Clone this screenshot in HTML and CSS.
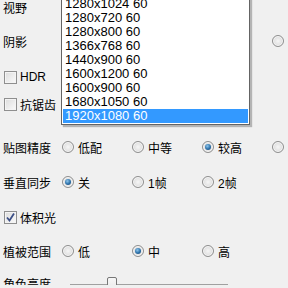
FILE: index.html
```html
<!DOCTYPE html>
<html lang="zh-CN">
<head>
    <meta charset="UTF-8">
    <title>画面设置</title>
    <link rel="stylesheet" href="styles.css">
</head>
<body>
    <div class="panel">
        <div class="row r-view">
            <span class="label">视野</span>
        </div>

        <div class="row r-shadow">
            <span class="label">阴影</span>
            <label class="opt"><span class="radio"></span></label>
            <label class="opt"><span class="radio"></span></label>
            <label class="opt"><span class="radio checked"></span></label>
            <label class="opt"><span class="radio"></span></label>
        </div>

        <div class="row r-hdr">
            <label class="check"><span class="box"></span>HDR</label>
        </div>

        <div class="row r-aa">
            <label class="check"><span class="box"></span>抗锯齿</label>
        </div>

        <div class="row r-tex">
            <span class="label">贴图精度</span>
            <label class="opt"><span class="radio"></span>低配</label>
            <label class="opt"><span class="radio"></span>中等</label>
            <label class="opt"><span class="radio checked"></span>较高</label>
            <label class="opt"><span class="radio"></span></label>
        </div>

        <div class="row r-vsync">
            <span class="label">垂直同步</span>
            <label class="opt"><span class="radio checked"></span>关</label>
            <label class="opt"><span class="radio"></span>1帧</label>
            <label class="opt"><span class="radio"></span>2帧</label>
        </div>

        <div class="row r-vol">
            <label class="check"><span class="box on">
                <svg width="11" height="11" viewBox="0 0 11 11"><path d="M2 5.5 L4.5 8.5 L9 1.5" fill="none" stroke="#3c4f86" stroke-width="1.8"/></svg>
            </span>体积光</label>
        </div>

        <div class="row r-veg">
            <span class="label">植被范围</span>
            <label class="opt"><span class="radio"></span>低</label>
            <label class="opt"><span class="radio checked"></span>中</label>
            <label class="opt"><span class="radio"></span>高</label>
        </div>

        <div class="row r-bright">
            <span class="label">角色亮度</span>
            <div class="slider">
                <div class="track"></div>
                <div class="thumb"></div>
            </div>
        </div>

        <ul class="dropdown">
            <li>1280x1024 60</li>
            <li>1280x720 60</li>
            <li>1280x800 60</li>
            <li>1366x768 60</li>
            <li>1440x900 60</li>
            <li>1600x1200 60</li>
            <li>1600x900 60</li>
            <li>1680x1050 60</li>
            <li class="selected">1920x1080 60</li>
        </ul>
    </div>
</body>
</html>
```

FILE: styles.css
```css
body {
    margin: 0;
    background-color: #f0f0f0;
    font-family: "Liberation Sans", "Noto Sans CJK SC", sans-serif;
    font-size: 12px;
    color: #000;
    overflow: hidden;
}

.panel {
    position: relative;
    height: 288px;
}

.row {
    display: grid;
    grid-template-columns: 62px 70px 70px 70px 70px;
    align-items: center;
    height: 20px;
}

.r-view   { margin-top: -3px; }
.r-shadow { margin-top: 14px; }
.r-hdr    { margin-top: 16px; }
.r-aa     { margin-top: 7px; }
.r-tex    { margin-top: 23px; }
.r-vsync  { margin-top: 15px; }
.r-vol    { margin-top: 15px; }
.r-veg    { margin-top: 14px; }
.r-bright { margin-top: 12px; }

.label {
    padding-left: 3px;
    white-space: nowrap;
}

.opt {
    display: flex;
    align-items: center;
    gap: 4px;
    white-space: nowrap;
}

.radio {
    position: relative;
    width: 10px;
    height: 10px;
    border: 1px solid #8f8f8f;
    border-radius: 50%;
    background: radial-gradient(circle at 50% 50%, #f6f6f6 0%, #e2e2e2 55%, #cfcfcf 100%);
    box-shadow: inset 0 0 0 1px #f8f8f8;
    flex: none;
}

.radio.checked::after {
    content: "";
    position: absolute;
    left: 2px;
    top: 2px;
    width: 6px;
    height: 6px;
    border-radius: 50%;
    background: radial-gradient(circle at 40% 35%, #8fc6ec 0%, #2a6fa8 55%, #173f6a 100%);
}

.check {
    grid-column: 1 / 3;
    display: flex;
    align-items: center;
    gap: 3px;
    padding-left: 4px;
    white-space: nowrap;
}

.box {
    display: flex;
    align-items: center;
    justify-content: center;
    width: 11px;
    height: 11px;
    border: 1px solid #8f8f8f;
    background: linear-gradient(135deg, #dcdcdc, #fbfbfb);
    box-shadow: inset 0 0 0 1px #f4f4f4;
    flex: none;
}

.slider {
    position: relative;
    grid-column: 2 / 5;
    height: 20px;
    margin-left: 8px;
}

.track {
    position: absolute;
    left: 0;
    right: 44px;
    top: 11px;
    height: 1px;
    border-top: 1px solid #a0a0a0;
    border-bottom: 1px solid #fff;
    background: #e3e3e3;
}

.thumb {
    position: absolute;
    left: 37px;
    top: 4px;
    width: 8px;
    height: 18px;
    border: 1px solid #777;
    border-radius: 2px 2px 0 0;
    background: linear-gradient(#f7f7f7, #e0e0e0);
}

.dropdown {
    position: absolute;
    left: 61px;
    top: -2px;
    width: 185px;
    margin: 0;
    padding: 1px;
    list-style: none;
    background: #fff;
    border: 1px solid #646464;
    box-shadow: 2px 2px 1px rgba(0, 0, 0, 0.25);
    font-size: 13px;
}

.dropdown li {
    height: 14px;
    line-height: 14px;
    padding-left: 2px;
    white-space: nowrap;
    overflow: hidden;
}

.dropdown li.selected {
    background-color: #3399ff;
    color: #fff;
}
```
